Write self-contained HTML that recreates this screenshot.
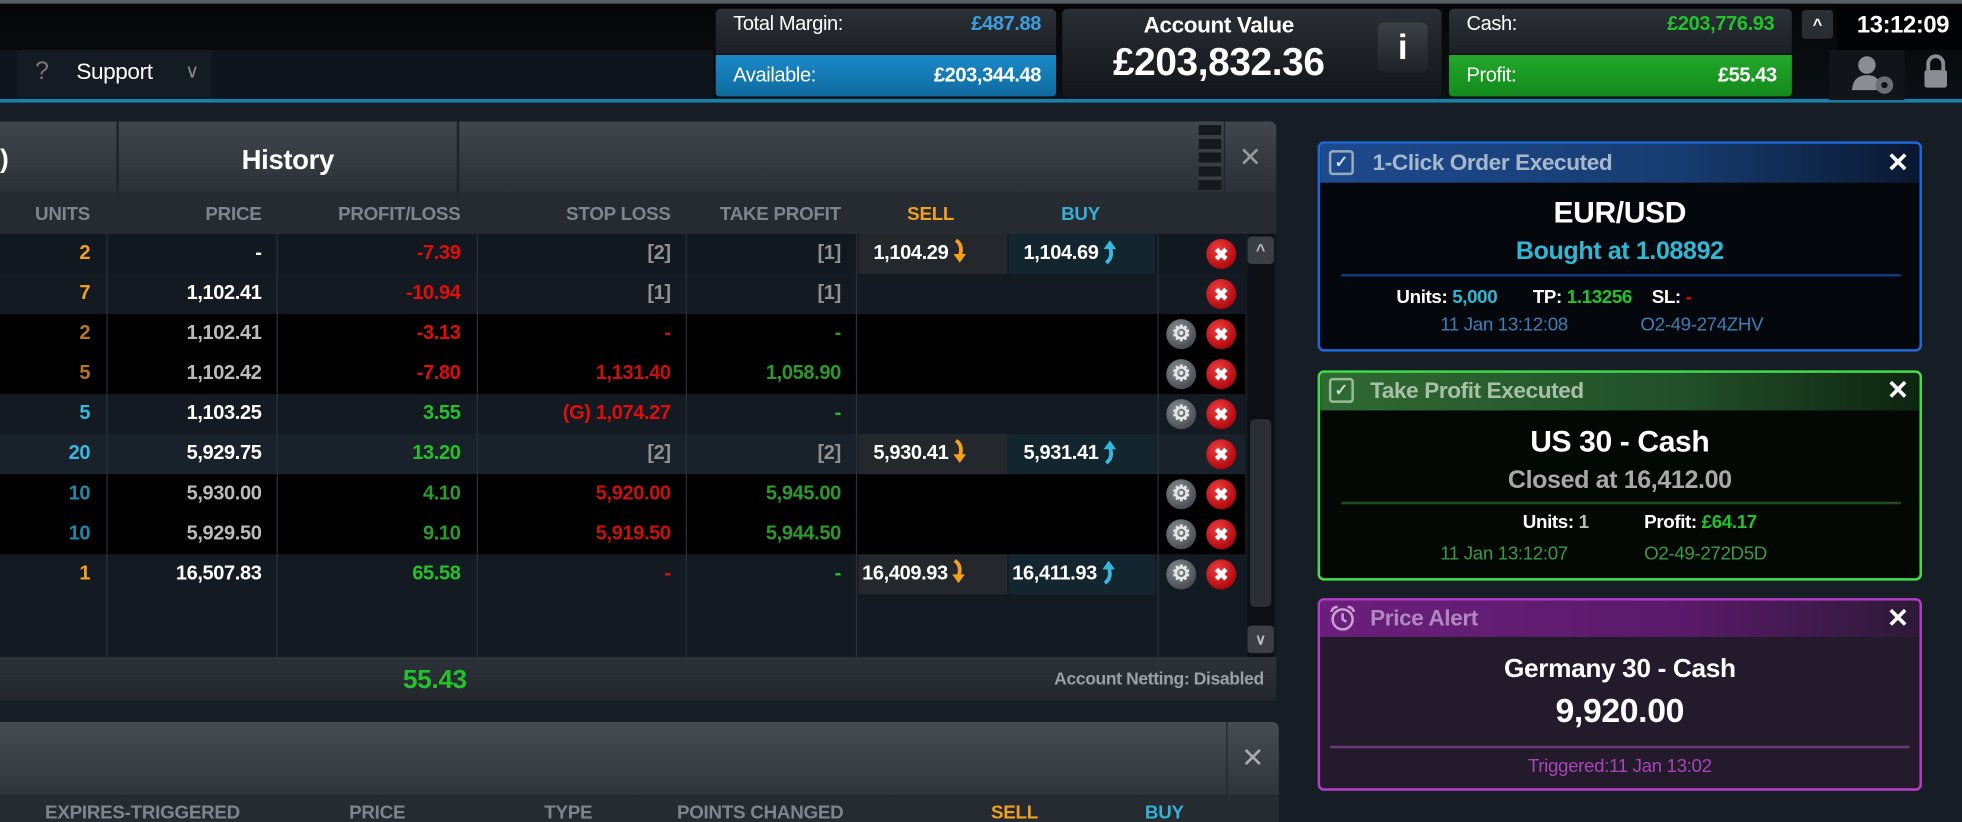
<!DOCTYPE html>
<html><head><meta charset="utf-8"><style>
*{margin:0;padding:0;box-sizing:border-box}
html,body{width:1962px;height:822px;overflow:hidden;background:#161c24}
#w{position:absolute;left:0;top:0;width:1568px;height:657px;transform:scale(1.25128);transform-origin:0 0;background:#171d25;font-family:"Liberation Sans",Arial,sans-serif;font-weight:bold;color:#fff;overflow:hidden}
.a{position:absolute}
.t{position:absolute;white-space:nowrap;letter-spacing:-0.3px}
.r{text-align:right}
.c{text-align:center}
.hd{font-size:15px;color:#7d858e;top:163px;letter-spacing:-0.2px}
.row{position:absolute;left:0;width:995px;height:32px}
.cell{position:absolute;top:0;height:32px;line-height:32px;font-size:16px;text-align:right;white-space:nowrap;letter-spacing:-0.3px}
.o{color:#f5a01a}.od{color:#b87718}.cy{color:#35b9e0}.cyd{color:#1f88a8}.w{color:#fff}.g{color:#bbb}.gr{color:#909090}.rd{color:#e00d0d}.rdd{color:#c81010}.gn{color:#22c32a}.gnd{color:#2a9a2a}
.xb{position:absolute;width:24px;height:24px;border-radius:50%;background:radial-gradient(circle at 40% 35%,#f04040,#b00a10 70%,#700);top:4px;left:964px;color:#fff;font-size:14px;line-height:24px;text-align:center}
.gb{position:absolute;width:24px;height:24px;border-radius:50%;background:radial-gradient(circle at 40% 35%,#8a9096,#4a5056 70%);top:4px;left:932px;color:#e8e8e8;font-size:17px;line-height:24px;text-align:center}
.sell{position:absolute;left:686px;width:119px;top:0;height:32px;background:#24282c}
.buy{position:absolute;left:806px;width:117px;top:0;height:32px;background:#13262f}
.vl{position:absolute;top:187px;height:338px;width:1px;background:#2a3038}
.note{position:absolute;border-radius:5px;overflow:hidden}
.ar{display:inline-block;vertical-align:middle;margin-left:3px;margin-top:-3px}
</style></head><body><div id="w">
<div class="a" style="left:0;top:0;width:1568px;height:3px;background:#5a5f66"></div>
<div class="a" style="left:0;top:3px;width:1568px;height:78px;background:linear-gradient(#050607,#0c1014)"></div>
<div class="a" style="left:0;top:40px;width:570px;height:38px;background:#0f151c"></div>
<div class="a" style="left:14px;top:40px;width:155px;height:38px;background:#141b23"></div>
<div class="t" style="left:28px;top:46px;font-size:20px;color:#777;font-weight:normal">?</div>
<div class="t" style="left:61px;top:47px;font-size:18px;font-weight:normal">Support</div>
<div class="t" style="left:148px;top:48px;font-size:15px;color:#888;font-weight:normal">&#8744;</div>
<div class="a" style="left:0;top:79px;width:1568px;height:3px;background:#1c7ea8"></div>
<div class="a" style="left:572px;top:7px;width:272px;height:36px;background:linear-gradient(#2c3137,#1c2026);border-radius:4px 4px 0 0"></div>
<div class="t" style="left:586px;top:11px;font-size:16px;font-weight:normal">Total Margin:</div>
<div class="t r" style="left:700px;width:132px;top:11px;font-size:16px;color:#3a9ee0">£487.88</div>
<div class="a" style="left:572px;top:44px;width:272px;height:33px;background:linear-gradient(#1a8ac8,#0f6a9e);border-radius:0 0 3px 3px"></div>
<div class="t" style="left:586px;top:52px;font-size:16px;font-weight:normal">Available:</div>
<div class="t r" style="left:700px;width:132px;top:52px;font-size:16px">£203,344.48</div>
<div class="a" style="left:849px;top:7px;width:303px;height:71px;background:linear-gradient(#2a2f35,#121519);border-radius:4px"></div>
<div class="t c" style="left:849px;width:250px;top:10px;font-size:18px">Account Value</div>
<div class="t c" style="left:849px;width:250px;top:32px;font-size:31px">£203,832.36</div>
<div class="a" style="left:1101px;top:18px;width:40px;height:40px;background:linear-gradient(#3c4146,#1e2226);border-radius:5px;font-size:28px;line-height:40px;text-align:center">i</div>
<div class="a" style="left:1158px;top:7px;width:274px;height:36px;background:linear-gradient(#2c3137,#1c2026);border-radius:4px 4px 0 0"></div>
<div class="t" style="left:1172px;top:11px;font-size:16px;font-weight:normal">Cash:</div>
<div class="t r" style="left:1290px;width:128px;top:11px;font-size:16px;color:#22c32a">£203,776.93</div>
<div class="a" style="left:1158px;top:44px;width:274px;height:33px;background:linear-gradient(#22a82a,#138a1c);border-radius:0 0 3px 3px"></div>
<div class="t" style="left:1172px;top:52px;font-size:16px;font-weight:normal">Profit:</div>
<div class="t r" style="left:1290px;width:130px;top:52px;font-size:16px">£55.43</div>
<div class="a" style="left:1440px;top:8px;width:25px;height:23px;background:#2a2e33;border-radius:3px;font-size:13px;line-height:23px;text-align:center">^</div>
<div class="a" style="left:1468px;top:4px;width:100px;height:36px;background:#020304"></div>
<div class="t" style="left:1484px;top:10px;font-size:19px">13:12:09</div>
<div class="a" style="left:1462px;top:40px;width:60px;height:40px;background:#111519"></div>
<svg class="a" style="left:1478px;top:42px" width="42" height="36" viewBox="0 0 42 36"><circle cx="14" cy="10" r="7" fill="#8a8e92"/><path d="M2 30 Q3 18 14 18 Q22 18 24 24 L22 30Z" fill="#8a8e92"/><circle cx="28" cy="26" r="7" fill="#6a6e72"/><circle cx="28" cy="26" r="2.5" fill="#111"/></svg>
<svg class="a" style="left:1536px;top:42px" width="22" height="30" viewBox="0 0 22 30"><path d="M5 14 V9 a6 6 0 0 1 12 0 V14" stroke="#8a8e92" stroke-width="3" fill="none"/><rect x="2" y="14" width="18" height="14" rx="2" fill="#8a8e92"/></svg>

<div class="a" style="left:0;top:97px;width:1020px;height:463px;background:#141a22;border-radius:0 5px 0 0"></div>
<div class="a" style="left:0;top:97px;width:1020px;height:57px;background:linear-gradient(#41464d,#2b3037);border-radius:0 5px 0 0"></div>
<div class="a" style="left:93px;top:97px;width:2px;height:57px;background:#20242a"></div>
<div class="a" style="left:365px;top:97px;width:2px;height:57px;background:#20242a"></div>
<div class="a" style="left:978px;top:97px;width:1px;height:57px;background:#20242a"></div>
<div class="t" style="left:0;top:116px;font-size:21px">)</div>
<div class="t c" style="left:95px;width:270px;top:115px;font-size:22px">History</div>
<div class="a" style="left:958px;top:100px;width:18px;height:52px;background:repeating-linear-gradient(#15181c 0 8px,#3a3e43 8px 11px)"></div>
<div class="t" style="left:990px;top:113px;font-size:22px;color:#999;font-weight:normal">&#10005;</div>
<div class="a" style="left:0;top:154px;width:1020px;height:33px;background:#262b32"></div>
<div class="t hd r" style="left:0;width:72px">UNITS</div>
<div class="t hd r" style="left:100px;width:109px">PRICE</div>
<div class="t hd r" style="left:230px;width:138px">PROFIT/LOSS</div>
<div class="t hd r" style="left:400px;width:136px">STOP LOSS</div>
<div class="t hd r" style="left:550px;width:122px">TAKE PROFIT</div>
<div class="t hd" style="left:725px;color:#f0a020">SELL</div>
<div class="t hd" style="left:848px;color:#35b0d8">BUY</div>

<div class="row" style="top:187px;background:#121820"><div class="cell o" style="left:0;width:72px">2</div><div class="cell w" style="left:90px;width:119px">-</div><div class="cell rd" style="left:230px;width:138px">-7.39</div><div class="cell gr" style="left:400px;width:136px">[2]</div><div class="cell gr" style="left:550px;width:122px">[1]</div><div class="sell"></div><div class="buy"></div><div class="cell w" style="left:686px;width:118px;text-align:left;padding-left:12px">1,104.29<svg class="ar" width="12" height="20" viewBox="0 0 12 20"><path d="M3 1 Q9 5 6 14" stroke="#f5a01a" stroke-width="3" fill="none"/><path d="M1 12 L6 19 L11 12Z" fill="#f5a01a"/></svg></div><div class="cell w" style="left:806px;width:116px;text-align:left;padding-left:12px">1,104.69<svg class="ar" width="12" height="20" viewBox="0 0 12 20"><path d="M3 19 Q9 15 6 6" stroke="#35b9e0" stroke-width="3" fill="none"/><path d="M1 8 L6 1 L11 8Z" fill="#35b9e0"/></svg></div><div class="xb">&#10006;</div></div>
<div class="row" style="top:219px;background:#141a22"><div class="cell o" style="left:0;width:72px">7</div><div class="cell w" style="left:90px;width:119px">1,102.41</div><div class="cell rd" style="left:230px;width:138px">-10.94</div><div class="cell gr" style="left:400px;width:136px">[1]</div><div class="cell gr" style="left:550px;width:122px">[1]</div><div class="xb">&#10006;</div></div>
<div class="row" style="top:251px;background:#000"><div class="cell od" style="left:0;width:72px">2</div><div class="cell g" style="left:90px;width:119px">1,102.41</div><div class="cell rd" style="left:230px;width:138px">-3.13</div><div class="cell rdd" style="left:400px;width:136px">-</div><div class="cell gnd" style="left:550px;width:122px">-</div><div class="gb">&#9881;</div><div class="xb">&#10006;</div></div>
<div class="row" style="top:283px;background:#000"><div class="cell od" style="left:0;width:72px">5</div><div class="cell g" style="left:90px;width:119px">1,102.42</div><div class="cell rd" style="left:230px;width:138px">-7.80</div><div class="cell rdd" style="left:400px;width:136px">1,131.40</div><div class="cell gnd" style="left:550px;width:122px">1,058.90</div><div class="gb">&#9881;</div><div class="xb">&#10006;</div></div>
<div class="row" style="top:315px;background:#141a22"><div class="cell cy" style="left:0;width:72px">5</div><div class="cell w" style="left:90px;width:119px">1,103.25</div><div class="cell gn" style="left:230px;width:138px">3.55</div><div class="cell rd" style="left:400px;width:136px">(G) 1,074.27</div><div class="cell gn" style="left:550px;width:122px">-</div><div class="gb">&#9881;</div><div class="xb">&#10006;</div></div>
<div class="row" style="top:347px;background:#19212a"><div class="cell cy" style="left:0;width:72px">20</div><div class="cell w" style="left:90px;width:119px">5,929.75</div><div class="cell gn" style="left:230px;width:138px">13.20</div><div class="cell gr" style="left:400px;width:136px">[2]</div><div class="cell gr" style="left:550px;width:122px">[2]</div><div class="sell"></div><div class="buy"></div><div class="cell w" style="left:686px;width:118px;text-align:left;padding-left:12px">5,930.41<svg class="ar" width="12" height="20" viewBox="0 0 12 20"><path d="M3 1 Q9 5 6 14" stroke="#f5a01a" stroke-width="3" fill="none"/><path d="M1 12 L6 19 L11 12Z" fill="#f5a01a"/></svg></div><div class="cell w" style="left:806px;width:116px;text-align:left;padding-left:12px">5,931.41<svg class="ar" width="12" height="20" viewBox="0 0 12 20"><path d="M3 19 Q9 15 6 6" stroke="#35b9e0" stroke-width="3" fill="none"/><path d="M1 8 L6 1 L11 8Z" fill="#35b9e0"/></svg></div><div class="xb">&#10006;</div></div>
<div class="row" style="top:379px;background:#000"><div class="cell cyd" style="left:0;width:72px">10</div><div class="cell g" style="left:90px;width:119px">5,930.00</div><div class="cell gnd" style="left:230px;width:138px">4.10</div><div class="cell rdd" style="left:400px;width:136px">5,920.00</div><div class="cell gnd" style="left:550px;width:122px">5,945.00</div><div class="gb">&#9881;</div><div class="xb">&#10006;</div></div>
<div class="row" style="top:411px;background:#000"><div class="cell cyd" style="left:0;width:72px">10</div><div class="cell g" style="left:90px;width:119px">5,929.50</div><div class="cell gnd" style="left:230px;width:138px">9.10</div><div class="cell rdd" style="left:400px;width:136px">5,919.50</div><div class="cell gnd" style="left:550px;width:122px">5,944.50</div><div class="gb">&#9881;</div><div class="xb">&#10006;</div></div>
<div class="row" style="top:443px;background:#141a22"><div class="cell o" style="left:0;width:72px">1</div><div class="cell w" style="left:90px;width:119px">16,507.83</div><div class="cell gn" style="left:230px;width:138px">65.58</div><div class="cell rd" style="left:400px;width:136px">-</div><div class="cell gn" style="left:550px;width:122px">-</div><div class="sell"></div><div class="buy"></div><div class="cell w" style="left:686px;width:118px;text-align:left;padding-left:3px">16,409.93<svg class="ar" width="12" height="20" viewBox="0 0 12 20"><path d="M3 1 Q9 5 6 14" stroke="#f5a01a" stroke-width="3" fill="none"/><path d="M1 12 L6 19 L11 12Z" fill="#f5a01a"/></svg></div><div class="cell w" style="left:806px;width:116px;text-align:left;padding-left:3px">16,411.93<svg class="ar" width="12" height="20" viewBox="0 0 12 20"><path d="M3 19 Q9 15 6 6" stroke="#35b9e0" stroke-width="3" fill="none"/><path d="M1 8 L6 1 L11 8Z" fill="#35b9e0"/></svg></div><div class="gb">&#9881;</div><div class="xb">&#10006;</div></div>
<div class="vl" style="left:85px"></div><div class="vl" style="left:221px"></div><div class="vl" style="left:381px"></div><div class="vl" style="left:548px"></div><div class="vl" style="left:684px"></div><div class="vl" style="left:925px"></div>
<div class="a" style="left:997px;top:187px;width:21px;height:338px;background:#0c1015"></div>
<div class="a" style="left:997px;top:189px;width:21px;height:22px;background:#3a3f45;border-radius:3px;font-size:13px;line-height:22px;text-align:center;color:#bbb">^</div>
<div class="a" style="left:999px;top:335px;width:17px;height:150px;background:#2a2f35;border-radius:4px"></div>
<div class="a" style="left:997px;top:500px;width:21px;height:22px;background:#3a3f45;border-radius:3px;font-size:12px;line-height:22px;text-align:center;color:#bbb">&#8744;</div>
<div class="a" style="left:0;top:525px;width:1020px;height:35px;background:linear-gradient(#2d3239,#23272d)"></div>
<div class="t" style="left:322px;top:532px;font-size:21px;color:#22c32a">55.43</div>
<div class="t r" style="left:760px;width:250px;top:534px;font-size:14px;color:#9aa0a6">Account Netting: Disabled</div>

<div class="a" style="left:0;top:577px;width:1022px;height:80px;background:#262b32;border-radius:0 5px 0 0"></div>
<div class="a" style="left:0;top:577px;width:1022px;height:58px;background:linear-gradient(#474c53,#30353b);border-radius:0 5px 0 0"></div>
<div class="a" style="left:980px;top:577px;width:1px;height:58px;background:#22262b"></div>
<div class="t" style="left:992px;top:593px;font-size:22px;color:#aaa;font-weight:normal">&#10005;</div>
<div class="t hd" style="left:36px;top:641px">EXPIRES-TRIGGERED</div>
<div class="t hd" style="left:279px;top:641px">PRICE</div>
<div class="t hd" style="left:435px;top:641px">TYPE</div>
<div class="t hd" style="left:541px;top:641px">POINTS CHANGED</div>
<div class="t hd" style="left:792px;top:641px;color:#f0a020">SELL</div>
<div class="t hd" style="left:915px;top:641px;color:#35b0d8">BUY</div>

<div class="note" style="left:1053px;top:113px;width:483px;height:168px;border:2px solid #1f68d8;background:#04070b">
<div class="a" style="left:0;top:0;width:479px;height:31px;background:linear-gradient(90deg,#1d4a8e,#173c70 60%,#0a1830)"></div>
<div class="a" style="left:7px;top:5px;width:20px;height:20px;border:2px solid #9ab;border-radius:3px;color:#cde;font-size:13px;line-height:16px;text-align:center">&#10003;</div>
<div class="t" style="left:42px;top:5px;font-size:18px;color:#a8b8cc">1-Click Order Executed</div>
<div class="t" style="left:453px;top:3px;font-size:21px">&#10005;</div>
<div class="t c" style="left:0;width:479px;top:42px;font-size:24px">EUR/USD</div>
<div class="t c" style="left:0;width:479px;top:75px;font-size:20px;color:#2fb8d4">Bought at 1.08892</div>
<div class="a" style="left:17px;top:104px;width:447px;height:2px;background:#123a78"></div>
<div class="t" style="left:61px;top:114px;font-size:15px">Units: <span style="color:#2fb8d4">5,000</span></div>
<div class="t" style="left:170px;top:114px;font-size:15px">TP: <span class="gn">1.13256</span></div>
<div class="t" style="left:265px;top:114px;font-size:15px">SL: <span class="rd">-</span></div>
<div class="t" style="left:96px;top:136px;font-size:15px;color:#3a80b8;font-weight:normal">11 Jan 13:12:08</div>
<div class="t" style="left:256px;top:136px;font-size:15px;color:#3a80b8;font-weight:normal">O2-49-274ZHV</div>
</div>
<div class="note" style="left:1053px;top:296px;width:483px;height:168px;border:2px solid #3fe04a;background:#030805">
<div class="a" style="left:0;top:0;width:479px;height:30px;background:linear-gradient(90deg,#2f6a32,#22502a 60%,#0e2410)"></div>
<div class="a" style="left:7px;top:4px;width:20px;height:20px;border:2px solid #9b9;border-radius:3px;color:#cdc;font-size:13px;line-height:16px;text-align:center">&#10003;</div>
<div class="t" style="left:40px;top:4px;font-size:18px;color:#a8c0a8">Take Profit Executed</div>
<div class="t" style="left:453px;top:2px;font-size:21px">&#10005;</div>
<div class="t c" style="left:0;width:479px;top:42px;font-size:24px">US 30 - Cash</div>
<div class="t c" style="left:0;width:479px;top:75px;font-size:20px;color:#a8a8a8">Closed at 16,412.00</div>
<div class="a" style="left:17px;top:103px;width:447px;height:2px;background:#1f4a22"></div>
<div class="t" style="left:162px;top:111px;font-size:15px">Units: <span style="color:#bbb">1</span></div>
<div class="t" style="left:259px;top:111px;font-size:15px">Profit: <span class="gn">£64.17</span></div>
<div class="t" style="left:96px;top:136px;font-size:15px;color:#3a9a44;font-weight:normal">11 Jan 13:12:07</div>
<div class="t" style="left:259px;top:136px;font-size:15px;color:#3a9a44;font-weight:normal">O2-49-272D5D</div>
</div>
<div class="note" style="left:1053px;top:478px;width:483px;height:154px;border:2px solid #b53cc8;background:#231a2c">
<div class="a" style="left:0;top:0;width:479px;height:29px;background:linear-gradient(90deg,#6b1f7c,#5a1a6a 60%,#2c1a36)"></div>
<svg class="a" style="left:7px;top:3px" width="22" height="22" viewBox="0 0 22 22"><circle cx="11" cy="12" r="8" stroke="#c9a0d0" stroke-width="2" fill="none"/><path d="M11 7 V12 L14 14" stroke="#c9a0d0" stroke-width="2" fill="none"/><path d="M2 6 Q3 2 7 2 M20 6 Q19 2 15 2" stroke="#c9a0d0" stroke-width="2" fill="none"/></svg>
<div class="t" style="left:40px;top:4px;font-size:18px;color:#b088c0">Price Alert</div>
<div class="t" style="left:453px;top:2px;font-size:21px">&#10005;</div>
<div class="t c" style="left:0;width:479px;top:43px;font-size:21px">Germany 30 - Cash</div>
<div class="t c" style="left:0;width:479px;top:73px;font-size:27px">9,920.00</div>
<div class="a" style="left:8px;top:116px;width:463px;height:2px;background:#6a3a78"></div>
<div class="t c" style="left:0;width:479px;top:124px;font-size:15px;color:#a844b8;font-weight:normal">Triggered:11 Jan 13:02</div>
</div>
</div></body></html>
